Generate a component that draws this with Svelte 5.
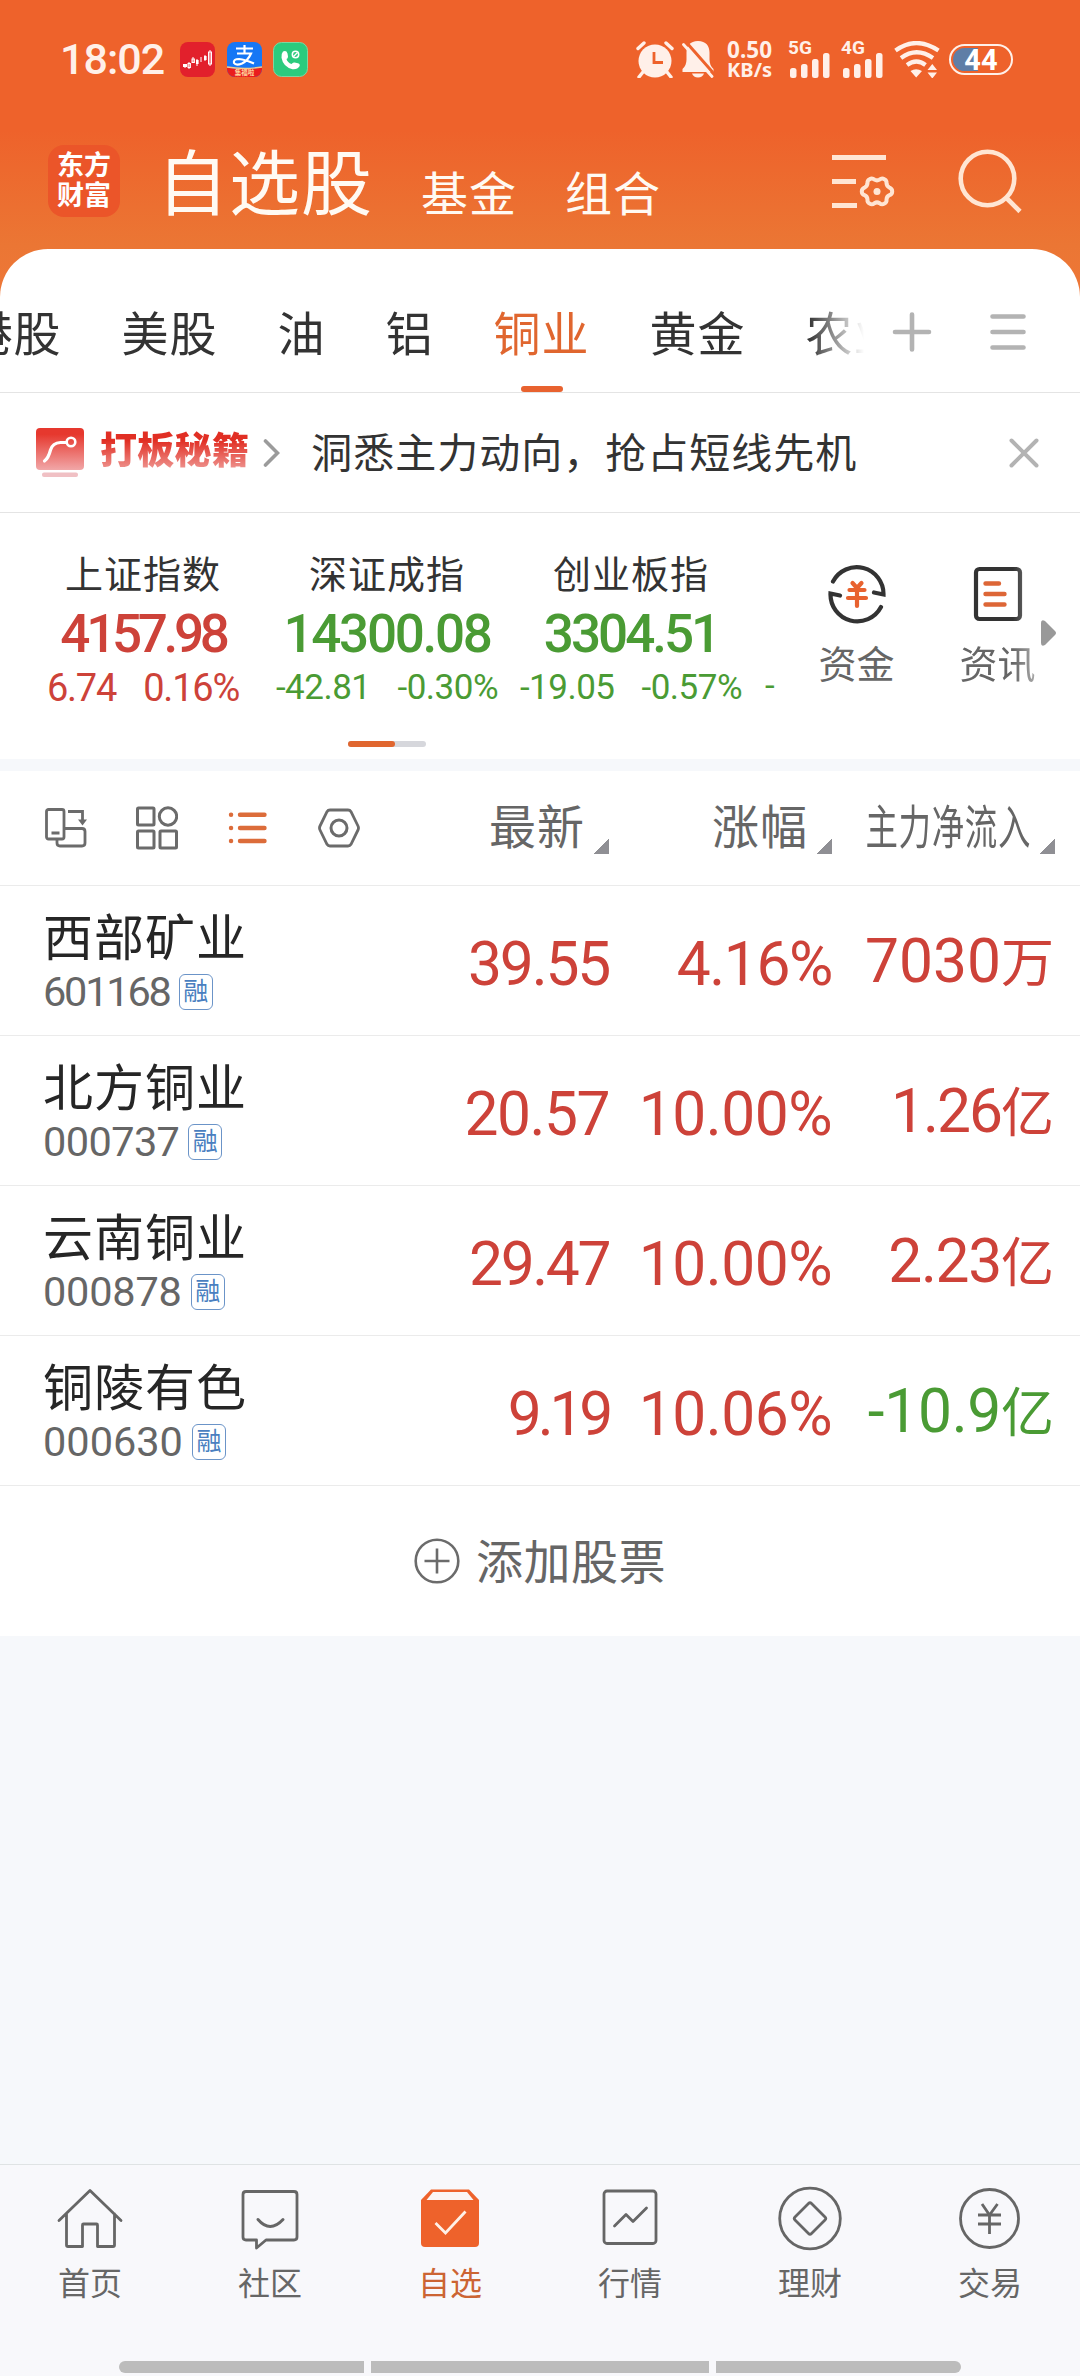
<script lang="ts">
  type Tone = 'up' | 'down';

  let activeTab = $state('铜业');
  let activeNav = $state('自选');

  const tabs = ['港股', '美股', '油', '铝', '铜业', '黄金', '农业'];

  const indices: { name: string; value: string; diff: string; pct: string; tone: Tone; ls: number }[] = [
    { name: '上证指数', value: '4157.98', diff: '6.74', pct: '0.16%', tone: 'up', ls: -4.3 },
    { name: '深证成指', value: '14300.08', diff: '-42.81', pct: '-0.30%', tone: 'down', ls: -2.3 },
    { name: '创业板指', value: '3304.51', diff: '-19.05', pct: '-0.57%', tone: 'down', ls: -3 }
  ];

  const columns = [
    { label: '最新', narrow: false },
    { label: '涨幅', narrow: false },
    { label: '主力净流入', narrow: true }
  ];

  const stocks: { name: string; code: string; price: string; pct: string; flow: string; unit: string; tone: Tone; ls: number[] }[] = [
    { name: '西部矿业', code: '601168', price: '39.55', pct: '4.16%', flow: '7030', unit: '万', tone: 'up', ls: [-2.2, -2.2, -1.4, 0] },
    { name: '北方铜业', code: '000737', price: '20.57', pct: '10.00%', flow: '1.26', unit: '亿', tone: 'up', ls: [-0.6, -1.5, -0.5, -2] },
    { name: '云南铜业', code: '000878', price: '29.47', pct: '10.00%', flow: '2.23', unit: '亿', tone: 'up', ls: [-0.2, -2.4, -0.5, -1.3] },
    { name: '铜陵有色', code: '000630', price: '9.19', pct: '10.06%', flow: '-10.9', unit: '亿', tone: 'down', ls: [0, -4.2, -0.5, -0.3] }
  ];

  const nav = ['首页', '社区', '自选', '行情', '理财', '交易'];
</script>

<div class="app">
  <header class="top">
    <div class="status">
      <span class="time">18:02</span>
      <div class="notif">
        <svg width="35" height="35" viewBox="0 0 35 35">
          <rect width="35" height="35" rx="8" fill="#e2202c" />
          <g stroke="#fff" stroke-width="1" fill="none">
            <path d="M5 22v4M9 20v7M13 15v6M17 17v7M21 15v5M25 13v6M30 8v16" />
            <rect x="28.5" y="10" width="3" height="12" />
            <rect x="8" y="21.5" width="2.4" height="4" />
            <rect x="12" y="17" width="2.4" height="3.5" />
          </g>
          <path d="M3 22h4v3H3zM16 18h2.6v4H16zM24 14h2.6v4H24z" fill="#fff" />
        </svg>
        <svg width="35" height="35" viewBox="0 0 35 35">
          <defs><clipPath id="pay"><rect width="35" height="35" rx="8" /></clipPath></defs>
          <g clip-path="url(#pay)">
            <rect width="35" height="35" fill="#1677f5" />
            <path d="M0 25.500q17 3 35 0V35H0z" fill="#ea1d1d" />
            <path d="M0 25q17 3 35 0" stroke="#f6c98c" stroke-width="1.4" fill="none" />
          </g>
          <path d="M9 6.500h17M17.500 3v8M10 11.500h14q-3 7-9 10-6 2.500-8-.5-1-4 5-4 6 .5 15 4.500" stroke="#fff" stroke-width="2.200" fill="none" />
          <text x="17.500" y="33" font-size="6.500" text-anchor="middle" class="paytag">集福啦</text>
        </svg>
        <svg width="35" height="35" viewBox="0 0 35 35">
          <rect x=".5" y=".5" width="34" height="34" rx="8" fill="#2bcb7e" stroke="#7fd6a0" />
          <path d="M10 9.500q3.500-1.500 4.500 2l.5 3q0 2-1.500 2.500 1 3.500 5 5 1.500-2 3-1.500l3.500.8q2.500 1 1.500 3-2 3.500-7 3-9.500-2.500-11-11.500-.3-4.300 1.500-6.300z" fill="#fff" />
          <circle cx="22.500" cy="12.500" r="3.200" stroke="#fff" stroke-width="1.500" fill="none" />
          <path d="M20.500 14.500l4-4" stroke="#fff" stroke-width="1.300" />
        </svg>
      </div>
      <div class="sys">
        <svg class="alarm" width="38" height="37" viewBox="0 0 38 37">
          <circle cx="19" cy="20" r="16.500" fill="#fff0e9" />
          <path d="M18 11v10.500h9" stroke="#ee622b" stroke-width="2.800" fill="none" />
          <path d="M2 7.500l6-5.500M36 7.500L30 2M7 31l-4 5M31 31l4 5" stroke="#fff0e9" stroke-width="3.400" stroke-linecap="round" />
        </svg>
        <svg class="bell" width="32" height="37" viewBox="0 0 32 37">
          <path d="M16 0c8 0 11.500 5 11.500 11.500v7q0 6 4 9.500v3H.5v-3q4-3.500 4-9.500v-7C4.500 5 8 0 16 0z" fill="#fff0e9" />
          <path d="M10 32.500h12q-1.500 4-6 4t-6-4z" fill="#fff0e9" />
          <path d="M4.500 1.500L34 35" stroke="#ee622b" stroke-width="3" />
          <path d="M1.500 3.500L30 35.500" stroke="#fff0e9" stroke-width="2.800" stroke-linecap="round" />
        </svg>
        <div class="speed"><span>0.50</span><span>KB/s</span></div>
        {#each ['5G', '4G'] as net}
          <div class="signal">
            <span>{net}</span>
            <svg width="41" height="25" viewBox="0 0 41 25">
              <g fill="#fff0e9">
                <rect x="0" y="15" width="6.500" height="10" rx="2.500" />
                <rect x="11" y="11" width="6.500" height="14" rx="2.500" />
                <rect x="22" y="6" width="6.500" height="19" rx="2.500" />
                <rect x="33" y="0" width="6.500" height="25" rx="2.500" />
              </g>
            </svg>
          </div>
        {/each}
        <svg class="wifi" width="46" height="37" viewBox="0 0 46 37">
          <g stroke="#fff0e9" fill="none" stroke-width="4.200">
            <path d="M1.500 9.500q20.500-15 43 0M7 17q15.500-11.500 32 0M13 24q9.500-7 18.500 0" />
          </g>
          <path d="M16.500 30q5.500-3.500 11.500 0l-5.800 6.500zM33.500 29l4.800-6 4.700 6zM33.500 31.500h9.500l-4.700 6z" fill="#fff0e9" />
        </svg>
        <div class="battery"><span>44</span></div>
      </div>
    </div>
    <div class="title-row">
      <div class="logo">东方<br />财富</div>
      <h1>自选股</h1>
      <span class="sub">基金</span>
      <span class="sub">组合</span>
      <svg class="manage" width="64" height="56" viewBox="0 0 64 56" fill="none" stroke="#ffe5d3">
        <path d="M0 5.500h54M0 29.500h24M0 53.500h25" stroke-width="4.800" />
        <path d="M37.600 27.200q2.600-1.600 4.800.4 2.600 1.600 5.200 0 2.200-2 4.800-.4 2.500 1.300 2.100 4 .2 3.200 3 4.400 2.700 1 2.700 3.800t-2.700 3.800q-2.800 1.200-3 4.400.4 2.700-2.100 4-2.600 1.600-4.800-.4-2.600-1.600-5.200 0-2.200 2-4.800.4-2.500-1.300-2.100-4-.2-3.200-3-4.400-2.700-1-2.700-3.800t2.700-3.800q2.800-1.200 3-4.400-.4-2.700 2.100-4z" stroke-width="4" />
        <circle cx="45" cy="39.400" r="3.500" fill="#ffe5d3" stroke="none" />
      </svg>
      <svg class="search" width="64" height="66" viewBox="0 0 64 66" fill="none" stroke="#ffe5d3" stroke-width="4.600">
        <circle cx="29.500" cy="29.500" r="26.800" />
        <path d="M47.500 48L62 62.500" />
      </svg>
    </div>
  </header>

  <main>
    <div class="tabbar">
      <div class="tabs">
        {#each tabs as tab}
          <button class:active={tab === activeTab} onclick={() => (activeTab = tab)}>{tab}</button>
        {/each}
      </div>
      <svg width="40" height="42" viewBox="0 0 40 42" stroke="#b3b3b3" stroke-width="4.600" stroke-linecap="round">
        <path d="M20 3.500v35M3 21h34" />
      </svg>
      <svg class="burger" width="38" height="42" viewBox="0 0 38 42" stroke="#b3b3b3" stroke-width="4.600" stroke-linecap="round">
        <path d="M3.500 5.500h31M3.500 21h31M3.500 36.500h31" />
      </svg>
    </div>

    <div class="promo">
      <svg width="48" height="50" viewBox="0 0 48 50">
        <defs>
          <linearGradient id="red" x1="0" y1="0" x2="0" y2="1">
            <stop offset=".15" stop-color="#e6382e" />
            <stop offset="1" stop-color="#f1a7a8" />
          </linearGradient>
        </defs>
        <rect width="48" height="42" rx="4" fill="url(#red)" />
        <rect x="6" y="44.500" width="36" height="4.500" rx="2" fill="#f0c0c4" />
        <path d="M8.500 33q4-3 6-11 2-7 10-7.500h6" stroke="#fff" stroke-width="3.200" fill="none" stroke-linecap="round" />
        <circle cx="35" cy="14" r="4.300" stroke="#fff" stroke-width="2.600" fill="none" />
      </svg>
      <strong>打板秘籍</strong>
      <svg class="chev" width="17" height="30" viewBox="0 0 17 30" fill="none" stroke="#9b9b9b" stroke-width="3.600" stroke-linecap="round">
        <path d="M2.500 3l12 12-12 12" />
      </svg>
      <span class="slogan">洞悉主力动向，抢占短线先机</span>
      <svg class="close" width="32" height="32" viewBox="0 0 32 32" stroke="#b3b3b3" stroke-width="4" stroke-linecap="round">
        <path d="M3.500 3.500l25 25M28.500 3.500l-25 25" />
      </svg>
    </div>

    <section class="market">
      <div class="strip">
        {#each indices as idx}
          <div class="index {idx.tone}">
            <span class="iname">{idx.name}</span>
            <span class="ival" style="letter-spacing: {idx.ls}px">{idx.value}</span>
            <span class="ichg"><span>{idx.diff}</span><span>{idx.pct}</span></span>
          </div>
        {/each}
        <span class="peek">-</span>
      </div>
      <div class="tools">
        <div class="tool">
          <svg width="60" height="62" viewBox="0 0 60 62" fill="none" stroke="#333" stroke-width="4.200" stroke-linecap="round">
            <path d="M6 18.500A26.800 26.800 0 0 1 56.500 31.500L47 29.500M54 44A26.800 26.800 0 0 1 3.500 30.500L13 32.500" />
            <path d="M25.500 20l4.500 5 4.500-5M22.500 27h15M21 35h18M30 26v17" stroke="#e8622f" />
          </svg>
          <span>资金</span>
        </div>
        <div class="tool">
          <svg width="60" height="62" viewBox="0 0 60 62" fill="none" stroke-linecap="round">
            <rect x="8" y="6" width="44" height="50" rx="3.500" stroke="#333" stroke-width="4.200" />
            <path d="M17.500 20.500h13.500M17.500 31h19M17.500 41.500h19" stroke="#dd6636" stroke-width="4.400" />
          </svg>
          <span>资讯</span>
        </div>
      </div>
      <svg class="more" width="16" height="26" viewBox="0 0 16 26"><path d="M0 3q0-4 4-2l10 10q2 2 0 4L4 25q-4 2-4-2z" fill="#999" /></svg>
      <div class="pager"><i></i></div>
    </section>

    <section class="list">
      <div class="head">
        <div class="views">
          <svg width="42" height="44" viewBox="0 0 42 44" fill="none" stroke="#6b6b6b" stroke-width="2.800">
            <rect x="1.500" y="3.500" width="17.500" height="29.500" rx="2" />
            <path d="M6.500 27h8M19 22.500h18q3 0 3 3V37q0 3-3 3H15q-3 0-3-3v-4M23 5.500h14.500v11" />
            <path d="M33 13.500h9l-4.500 6z" fill="#6b6b6b" stroke="none" />
          </svg>
          <svg width="42" height="44" viewBox="0 0 42 44" fill="none" stroke="#6b6b6b" stroke-width="3">
            <rect x="1.500" y="2" width="16.500" height="17" rx="1" />
            <circle cx="32" cy="10.500" r="8.700" />
            <rect x="1.500" y="25" width="16.500" height="17" rx="1" />
            <rect x="24" y="25" width="16.500" height="17" rx="1" />
          </svg>
          <svg width="42" height="44" viewBox="0 0 42 44" stroke="#dc6c3a" stroke-width="4.400" stroke-linecap="round">
            <path d="M4 8.800h.1M4 22h.1M4 35h.1M13 8.800h24.500M13 22h24.500M13 35h24.500" />
          </svg>
          <svg width="42" height="44" viewBox="0 0 42 44" fill="none" stroke="#6b6b6b" stroke-width="2.800">
            <path d="M12 4h18q2 0 3 1.700l7 14.300q1 2 0 4l-7 14.300q-1 1.700-3 1.700H12q-2 0-3-1.700L2 24q-1-2 0-4L9 5.700Q10 4 12 4z" />
            <circle cx="21" cy="22" r="8" stroke-width="3" />
          </svg>
        </div>
        {#each columns as col}
          <div class="col">
            <span class:narrow={col.narrow}>{col.label}</span>
            <i class="tri"></i>
          </div>
        {/each}
      </div>

      {#each stocks as s}
        <div class="row">
          <div class="who">
            <span class="name">{s.name}</span>
            <span class="code"><span style="letter-spacing: {s.ls[0]}px">{s.code}</span><em>融</em></span>
          </div>
          <span class="num up" style="letter-spacing: {s.ls[1]}px">{s.price}</span>
          <span class="num up" style="letter-spacing: {s.ls[2]}px">{s.pct}</span>
          <span class="num flow {s.tone}" style="letter-spacing: {s.ls[3]}px">{s.flow}<b>{s.unit}</b></span>
        </div>
      {/each}

      <button class="add">
        <svg width="46" height="46" viewBox="0 0 46 46" fill="none" stroke="#6b6b6b" stroke-width="2.600">
          <circle cx="23" cy="23" r="21.300" />
          <path d="M23 10.500v25M10.500 23h25" />
        </svg>
        <span>添加股票</span>
      </button>
    </section>
  </main>

  <nav>
    {#each nav as item}
      <button class:active={item === activeNav} onclick={() => (activeNav = item)}>
        <svg width="66" height="66" viewBox="0 0 66 66" fill="none" stroke="#666" stroke-width="2.800" stroke-linecap="round" stroke-linejoin="round">
          {#if item === '首页'}
            <path d="M2 34.500L33 4.500l31 30M9.500 28v31q0 1.500 1.500 1.500h14.500V39q0-1 1-1h13q1 0 1 1v21.500H56q1.500 0 1.500-1.500V28" />
          {:else if item === '社区'}
            <path d="M9 5.500h48q3 0 3 3v42.500q0 3-3 3H29l-9.500 8v-8H9q-3 0-3-3V8.500q0-3 3-3z" />
            <path d="M21 33.500q12 14 25 0" stroke-width="3" />
          {:else if item === '自选'}
            <path d="M4 14L14 3.500h38L62 14v43q0 4-4 4H8q-4 0-4-4z" fill="#ee622b" stroke="none" />
            <path d="M16 6h34l6.500 8h-47z" fill="#fbf5f3" stroke="none" />
            <path d="M18.500 37l10 10 20-21.500" stroke="#fff0e6" stroke-linecap="butt" stroke-linejoin="miter" />
          {:else if item === '行情'}
            <rect x="7" y="5" width="52" height="52.500" rx="3" />
            <path d="M17.500 40L29 28.500l7 7 13.500-13.500" />
          {:else if item === '理财'}
            <circle cx="33" cy="32.500" r="30.300" />
            <path d="M31.500 17.500q1.500-1.500 3 0l13.500 13.500q1.500 1.500 0 3L34.500 47.500q-1.500 1.500-3 0L18 34q-1.500-1.500 0-3z" />
          {:else}
            <circle cx="32.500" cy="32.500" r="29" />
            <path d="M25 18l7.500 11L40.500 18M21 29h23M21 38h23M32.500 29v19" stroke-linecap="butt" />
          {/if}
        </svg>
        <span>{item}</span>
      </button>
    {/each}
  </nav>
  <div class="gesture"><i></i><i class="mid"></i><i></i></div>
</div>

<style>
  :global(body) { margin: 0; background: #f6f8fb; }
  .app {
    width: 1080px;
    height: 2376px;
    overflow: hidden;
    display: flex;
    flex-direction: column;
    background: linear-gradient(#ee622b 130px, #eb7634 245px, #ee7738 300px, #f6f8fb 300px);
    font-family: Roboto, 'Noto Sans CJK SC', sans-serif;
    color: #333;
  }
  button { border: 0; padding: 0; margin: 0; background: none; font: inherit; color: inherit; }
  svg { display: block; flex: none; }

  .top { height: 249px; flex: none; }
  .status { display: flex; align-items: center; height: 37px; padding: 41px 67px 0 60px; color: #fff0e9; }
  .time { font-size: 43px; font-weight: 500; line-height: 37px; width: 120px; letter-spacing: -1px; }
  .notif { display: flex; gap: 11.5px; }
  .paytag { fill: #ffd9a0; font-family: 'Noto Sans CJK SC', sans-serif; font-weight: 700; }
  .sys { display: flex; align-items: center; margin-left: auto; }
  .bell { margin-left: 8px; }
  .speed { display: flex; flex-direction: column; align-items: flex-end; margin: 0 16px 0 13px; font-size: 22.5px; line-height: 20px; font-weight: 700; font-family: 'Noto Sans', sans-serif; }
  .speed span:last-child { font-size: 20px; }
  .signal { position: relative; width: 42px; height: 37px; padding: 12px 0 0 2px; margin-right: 11px; box-sizing: border-box; }
  .signal span { position: absolute; left: 0; top: -1px; font-size: 19px; line-height: 16px; font-weight: 700; }
  .wifi { margin-right: 9px; }
  .battery { width: 64px; height: 31px; box-sizing: border-box; border: 2.5px solid #fff0e9; border-radius: 16px; background: linear-gradient(90deg, #5f7ea6 44%, transparent 44%) content-box; padding: 2px; display: flex; align-items: center; justify-content: center; }
  .battery span { font-size: 29px; font-weight: 700; color: #fff; line-height: 24px; }

  .title-row { display: flex; height: 72px; padding: 67px 0 0 48px; color: #fffaf3; }
  .logo { width: 72px; height: 72px; box-sizing: border-box; padding-top: 6px; border-radius: 16px; background: #eb5529; color: #fff; font-size: 27px; line-height: 30px; text-align: center; font-weight: 700; }
  h1 { margin: 4px 0 0 37px; font-size: 71px; line-height: 72px; font-weight: 400; letter-spacing: 1px; width: 222px; }
  .sub { margin-left: 42px; margin-right: 6px; font-size: 47px; line-height: 99px; letter-spacing: 1px; }
  .sub + .sub { margin-left: 42px; }
  .manage { margin: 7px 0 0 auto; }
  .search { margin: 4px 58px 0 62px; }

  main { flex: none; background: #fff; border-radius: 48px 48px 0 0; overflow: hidden; }
  .tabbar { display: flex; align-items: center; height: 143px; border-bottom: 1px solid #e4e4e4; }
  .tabs { width: 866px; height: 143px; overflow: hidden; display: flex; gap: 60px; mask-image: linear-gradient(90deg, #000 808px, transparent 864px); }
  .tabs button { position: relative; flex: none; font-size: 47px; letter-spacing: 1px; line-height: 171px; height: 143px; }
  .tabs button:first-child { margin-left: -34.500px; }
  .tabs .active { color: #e0662f; }
  .tabs .active::after { content: ''; position: absolute; left: 50%; bottom: 0; width: 42px; height: 6px; margin-left: -21px; border-radius: 3px; background: #e8622f; }
  .tabbar > svg { margin: 23px 0 0 26px; }
  .tabbar > .burger { margin-left: 57px; }

  .promo { display: flex; align-items: center; height: 119px; padding: 0 40px 0 36px; border-bottom: 1px solid #e4e4e4; }
  .promo strong { margin: -2px 0 0 16px; font-size: 37px; font-weight: 900; line-height: 46px; letter-spacing: .3px; background: linear-gradient(#e12f24 25%, #f0a09c 95%); background-clip: text; color: transparent; }
  .chev { margin-left: 14px; }
  .slogan { margin: -5px 0 0 31px; font-size: 41px; letter-spacing: 1px; }
  .close { margin-left: auto; }

  .market { position: relative; display: flex; height: 246px; border-bottom: 12px solid #f6f8fb; }
  .strip { display: flex; width: 755px; overflow: hidden; padding-left: 21px; flex: none; }
  .index { flex: none; width: 244px; display: flex; flex-direction: column; align-items: center; white-space: nowrap; }
  .iname { margin-top: 38px; font-size: 38px; line-height: 48px; letter-spacing: 1px; }
  .ival { margin-top: 2px; font-size: 53px; line-height: 66px; font-weight: 500; }
  .ichg { display: flex; gap: 27px; font-size: 35px; line-height: 44px; margin-top: -1px; letter-spacing: -.5px; }
  .index.up .ichg { font-size: 38px; gap: 27px; letter-spacing: -1.2px; }
  .up .ival, .up .ichg, .num.up { color: #cd4239; }
  .down .ival, .down .ichg, .num.down, .peek { color: #4a9b34; }
  .peek { padding: 151px 0 0 12px; font-size: 35px; line-height: 44px; }
  .tools { display: flex; padding: 50px 0 0 42px; gap: 64px; }
  .tool { width: 77px; display: flex; flex-direction: column; align-items: center; color: #666; font-size: 38px; white-space: nowrap; }
  .tool span { line-height: 46px; margin-top: 17px; }
  .tool:last-child { mask-image: linear-gradient(90deg, #000 70%, rgba(0, 0, 0, .55)); }
  .more { position: absolute; left: 1041px; top: 107px; }
  .pager { position: absolute; left: 348px; top: 228px; width: 78px; height: 6px; border-radius: 3px; background: #d6d7dc; }
  .pager i { display: block; width: 47px; height: 6px; border-radius: 3px; background: #e0662f; }

  .head, .row { display: grid; grid-template-columns: 387px 222px 223px 223px; border-bottom: 1px solid #ebebeb; }
  .head { height: 114px; align-items: center; color: #666; }
  .views { display: flex; gap: 49px; padding-left: 45px; }
  .col { display: flex; justify-content: flex-end; align-items: center; font-size: 47px; letter-spacing: 1px; line-height: 60px; }
  .narrow { transform: scaleX(.69); transform-origin: right; white-space: nowrap; flex: none; }
  .tri { flex: none; width: 15px; height: 15px; margin: 36px 0 0 9px; background: linear-gradient(135deg, transparent 50%, #8f8f94 50%); }

  .row { height: 149px; }
  .who { padding-left: 43px; }
  .name { display: block; margin-top: 23px; font-size: 50px; line-height: 60px; letter-spacing: 1px; color: #262626; }
  .code { display: flex; align-items: center; font-size: 41.500px; line-height: 46px; color: #666; }
  .code em { width: 32px; height: 34px; margin-left: 9px; border: 1.500px solid #6b94c8; border-radius: 6px; font-style: normal; font-size: 25px; line-height: 33px; text-align: center; color: #4a7fc0; }
  .num { font-size: 60.500px; line-height: 158px; text-align: right; white-space: nowrap; }
  .flow { line-height: 152px; margin-right: 1px; }
  .flow b { font-weight: 400; font-size: 53px; letter-spacing: 0; }

  .add { display: flex; width: 1080px; height: 150px; align-items: center; justify-content: center; gap: 16px; font-size: 47px; letter-spacing: .5px; color: #666; }
  .add span { margin-top: -5px; }

  nav { display: flex; height: 196px; margin-top: auto; border-top: 1px solid #dfe3e4; background: #f8f8fb; }
  nav button { width: 180px; display: flex; flex-direction: column; align-items: center; padding-top: 21px; color: #666; font-size: 32px; line-height: 44px; }
  nav button span { margin-top: 10px; }
  nav .active { color: #cc6433; }
  .gesture { display: flex; justify-content: center; gap: 7px; height: 15px; background: #f8f8fb; flex: none; }
  .gesture i { width: 245px; height: 12px; background: #bcbcbc; border-radius: 6px 0 0 6px; }
  .gesture .mid { width: 338px; border-radius: 0; }
  .gesture i:last-child { border-radius: 0 6px 6px 0; }
</style>
